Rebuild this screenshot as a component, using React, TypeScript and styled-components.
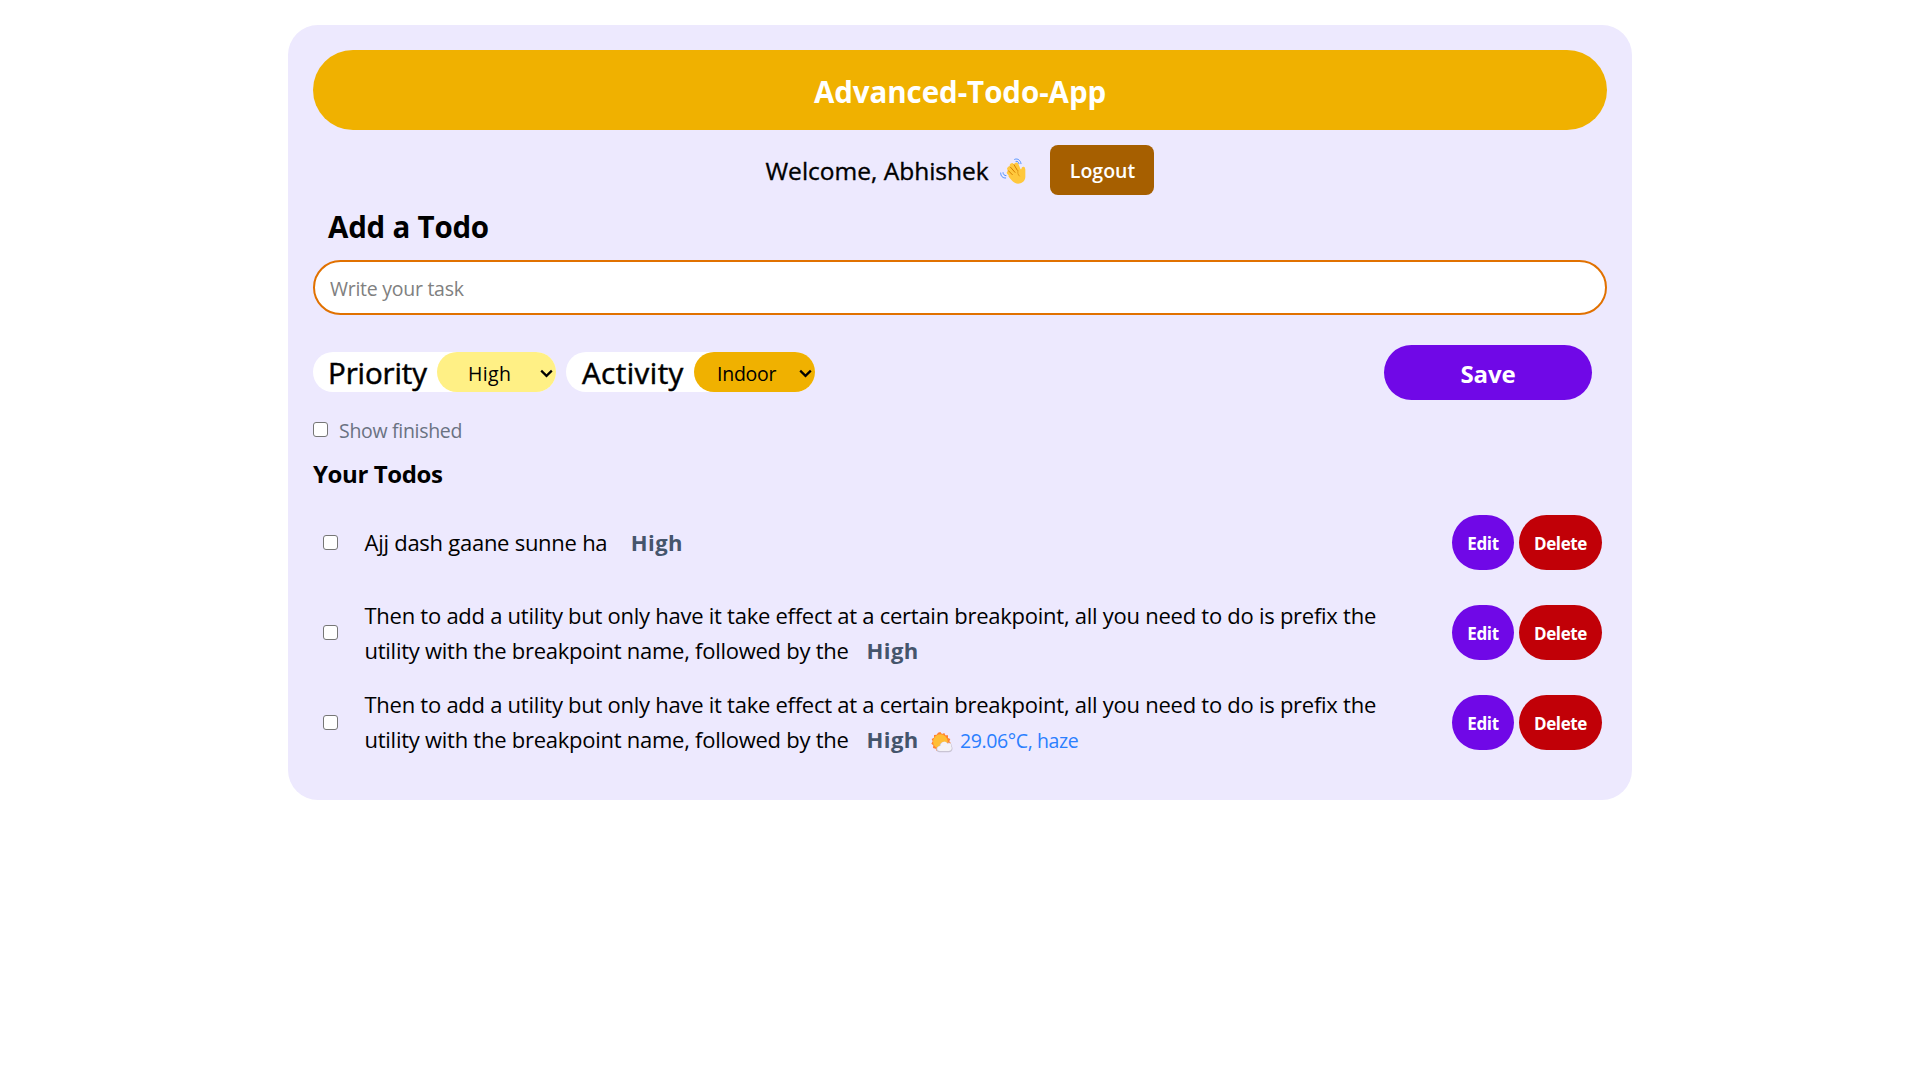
import React, { useState } from "react";
import styled, { createGlobalStyle } from "styled-components";

const GlobalStyle = createGlobalStyle`
  *, *::before, *::after { box-sizing: border-box; }
  body {
    margin: 0;
    background: #fff;
    color: #000;
    font-family: "Open Sans", "Noto Sans", sans-serif;
  }
  h1, h2, h3, p, ul { margin: 0; padding: 0; }
  button, input, select { font-family: inherit; border: 0; margin: 0; }
`;

const Card = styled.main`
  width: 1344px;
  height: 775px;
  margin: 25px auto;
  padding: 25px;
  border-radius: 30px;
  background: #ede9fe;
  display: flex;
  flex-direction: column;
  & > * { flex: none; }
`;

const Banner = styled.h1`
  height: 80px;
  padding-top: 2px;
  border-radius: 40px;
  background: #f0b100;
  color: #fff;
  font-size: 29.5px;
  font-weight: 700;
  line-height: 79px;
  letter-spacing: -0.06px;
  text-align: center;
`;

const Greeting = styled.div`
  display: flex;
  align-items: center;
  height: 50px;
  margin-top: 15px;
  padding-left: 452.5px;
`;

const GreetingText = styled.h2`
  width: 234.5px;
  padding-top: 1px;
  font-size: 24.5px;
  font-weight: 500;
  line-height: 50px;
  -webkit-text-stroke: 0.35px #000;
  white-space: nowrap;
`;

const WaveIcon = styled.svg`
  width: 26px;
  height: 26px;
  margin-top: 2px;
`;

const LogoutButton = styled.button`
  width: 104px;
  height: 50px;
  margin-left: auto;
  margin-right: 453px;
  padding: 0 0 0 1px;
  border-radius: 8px;
  background: #a65f00;
  color: #fff;
  font-size: 19.5px;
  font-weight: 600;
`;

const AddHeading = styled.h2`
  height: 65px;
  padding: 11px 0 0 15px;
  font-size: 29.5px;
  font-weight: 700;
  line-height: 41px;
  letter-spacing: -0.22px;
`;

const TaskInput = styled.input`
  width: 100%;
  height: 55px;
  padding: 2px 15px 0;
  border: 2px solid #e17100;
  border-radius: 28px;
  background: #fff;
  font-size: 19.5px;
  letter-spacing: -0.27px;
  outline: none;
  &::placeholder { color: #808080; opacity: 1; }
`;

const Controls = styled.div`
  display: flex;
  align-items: center;
  gap: 10px;
  height: 55px;
  margin-top: 30px;
`;

const Pill = styled.label<{ $width: number; $indent: number }>`
  display: flex;
  justify-content: space-between;
  width: ${p => p.$width}px;
  height: 40px;
  margin-top: -1px;
  padding-left: ${p => p.$indent}px;
  border-radius: 20px;
  background: #fff;
`;

const PillName = styled.span<{ $spacing: number }>`
  font-size: 29.5px;
  font-weight: 500;
  line-height: 41px;
  -webkit-text-stroke: 0.5px #000;
  letter-spacing: ${p => p.$spacing}px;
`;

const SelectBox = styled.span<{ $width: number }>`
  display: grid;
  width: ${p => p.$width}px;
  height: 40px;
`;

const Select = styled.select<{ $bg: string; $indent: number; $spacing: number }>`
  grid-area: 1 / 1;
  width: 100%;
  height: 40px;
  padding: 3px 0 0 ${p => p.$indent}px;
  appearance: none;
  border-radius: 20px;
  background: ${p => p.$bg};
  color: #000;
  font-size: 19.5px;
  letter-spacing: ${p => p.$spacing}px;
`;

const Chevron = styled.svg`
  grid-area: 1 / 1;
  align-self: center;
  justify-self: end;
  width: 13px;
  height: 9px;
  margin-right: 3.5px;
  margin-top: 2px;
  pointer-events: none;
`;

const SaveButton = styled.button`
  width: 208px;
  height: 55px;
  margin: 0 15px 0 auto;
  padding: 2px 0 0;
  border-radius: 28px;
  background: #7008e7;
  color: #fff;
  font-size: 24px;
  font-weight: 700;
  letter-spacing: -0.1px;
`;

const Checkbox = styled.input.attrs({ type: "checkbox" })`
  flex: none;
  appearance: none;
  width: 15px;
  height: 15px;
  border: 1px solid #767676;
  border-radius: 3px;
  background: #fff;
  &:checked { background: #0075ff; border-color: #0075ff; }
`;

const FilterRow = styled.label`
  display: flex;
  align-items: center;
  gap: 11px;
  height: 29px;
  margin-top: 15px;
`;

const FilterText = styled.span`
  padding-top: 2px;
  color: #6a7282;
  font-size: 19.5px;
  line-height: 27px;
  letter-spacing: -0.3px;
`;

const ListHeading = styled.h3`
  height: 39px;
  margin-top: 14px;
  font-size: 24px;
  font-weight: 700;
  line-height: 32px;
  letter-spacing: -0.4px;
`;

const List = styled.ul`
  list-style: none;
`;

const Row = styled.li`
  display: flex;
  align-items: center;
  height: 90px;
  padding: 0 5px 0 10px;
`;

const RowText = styled.p`
  width: 1062px;
  margin-left: 26.5px;
  padding-top: 1px;
  font-size: 22px;
  line-height: 35px;
  letter-spacing: -0.26px;
`;

const Priority = styled.span`
  margin-left: 18px;
  color: #45556c;
  font-weight: 700;
  letter-spacing: 0.4px;
`;

const Weather = styled.span`
  margin-left: 12.5px;
  color: #2b7fff;
  font-size: 19.5px;
  letter-spacing: -0.4px;
`;

const SunIcon = styled.svg`
  width: 22px;
  height: 21px;
  margin-left: -0.5px;
  margin-right: 7.5px;
  vertical-align: -5px;
`;

const Actions = styled.div`
  display: flex;
  gap: 5px;
  margin-left: auto;
  padding-top: 1px;
`;

const ActionButton = styled.button<{ $bg: string; $width: number }>`
  width: ${p => p.$width}px;
  height: 55px;
  padding: 2px 0 0;
  border-radius: 28px;
  background: ${p => p.$bg};
  color: #fff;
  font-size: 17px;
  font-weight: 700;
  letter-spacing: -0.38px;
`;

const Arrow = () => (
  <Chevron viewBox="0 0 13 9" fill="none" stroke="#000" strokeWidth="2.2">
    <path d="M1.2 1.6 6.5 6.9l5.3-5.3" />
  </Chevron>
);

const Wave = () => (
  <WaveIcon viewBox="0 0 78 78" fill="none" strokeLinecap="round" strokeLinejoin="round">
    <g stroke="#ffc83d" strokeWidth="13">
      <path d="M46 58 27 44" />
      <path d="M48 52 28 32" />
      <path d="M52 46 36 22" />
      <path d="M58 42 49 20" />
      <path d="M67 50 70 32" strokeWidth="11" />
    </g>
    <path d="M30 46 42 28 60 34 76 34 76 57C75 71 64 77 54 77 43 76 32 66 25 54Z" fill="#ffc83d" />
    <g stroke="#d67d00" strokeWidth="3">
      <path d="M25 38 37 50" />
      <path d="M31 27 45 43" />
      <path d="M42 20 52 37" />
      <path d="M54 38C52 44 54 50 58 54" stroke="#e59c18" />
    </g>
    <g stroke="#5092ff" strokeWidth="3">
      <path d="M44 4C53 0 62 7 63 17" />
      <path d="M48 10C53 9 56 12 57 17" />
      <path d="M2 45C2 54 8 61 17 60" />
      <path d="M9 44C9 49 13 53 18 53" />
    </g>
  </WaveIcon>
);

const Sun = () => (
  <SunIcon viewBox="0 0 66 63">
    <path
      fill="#ff8330"
      d="M28 0l5 6 7-3 3 7 8 0 0 8 7 3-3 7 5 6-6 5 1 8-7 1-3 7-8-2-5 6-7-4-8 2-3-7-8-2 1-8-6-5 4-7-3-7 7-4 0-8 8-1 4-6z"
    />
    <circle cx="28" cy="29" r="22" fill="#ffbe35" />
    <path
      fill="#c9c4d4"
      d="M26 61C12 61 13 43 25 43 27 30 41 25 49 34 51 28 64 33 62 42 68 50 63 61 53 61Z"
    />
    <path
      fill="#f4f2f7"
      d="M27 57C15 57 17 42 28 42 30 28 44 26 49 35 55 31 63 35 60 43 65 49 61 57 53 57Z"
    />
  </SunIcon>
);

type Todo = { text: string; priority: string; weather?: string };

const LONG_TEXT =
  "Then to add a utility but only have it take effect at a certain breakpoint, all you need to do is prefix the utility with the breakpoint name, followed by the";

const TODOS: Todo[] = [
  { text: "Ajj dash gaane sunne ha\u00a0", priority: "High" },
  { text: LONG_TEXT, priority: "High" },
  { text: LONG_TEXT, priority: "High", weather: "29.06°C, haze" },
];

export default function App() {
  const [task, setTask] = useState("");
  return (
    <>
      <GlobalStyle />
      <Card>
        <Banner>Advanced-Todo-App</Banner>
        <Greeting>
          <GreetingText>Welcome, Abhishek</GreetingText>
          <Wave />
          <LogoutButton>Logout</LogoutButton>
        </Greeting>
        <AddHeading>Add a Todo</AddHeading>
        <TaskInput placeholder="Write your task" value={task} onChange={e => setTask(e.target.value)} />
        <Controls>
          <Pill $width={243} $indent={15}>
            <PillName $spacing={-0.12}>Priority</PillName>
            <SelectBox $width={119}>
              <Select $bg="#fff085" $indent={31} $spacing={0.4} defaultValue="High">
                <option>High</option>
                <option>Medium</option>
                <option>Low</option>
              </Select>
              <Arrow />
            </SelectBox>
          </Pill>
          <Pill $width={249} $indent={16}>
            <PillName $spacing={0.45}>Activity</PillName>
            <SelectBox $width={121}>
              <Select $bg="#f0b100" $indent={23} $spacing={-0.24} defaultValue="Indoor">
                <option>Indoor</option>
                <option>Outdoor</option>
              </Select>
              <Arrow />
            </SelectBox>
          </Pill>
          <SaveButton>Save</SaveButton>
        </Controls>
        <FilterRow>
          <Checkbox />
          <FilterText>Show finished</FilterText>
        </FilterRow>
        <ListHeading>Your Todos</ListHeading>
        <List>
          {TODOS.map((todo, i) => (
            <Row key={i}>
              <Checkbox />
              <RowText>
                {todo.text}
                <Priority>{todo.priority}</Priority>
                {todo.weather && (
                  <Weather>
                    <Sun />
                    {todo.weather}
                  </Weather>
                )}
              </RowText>
              <Actions>
                <ActionButton $bg="#7008e7" $width={62}>Edit</ActionButton>
                <ActionButton $bg="#c10007" $width={83}>Delete</ActionButton>
              </Actions>
            </Row>
          ))}
        </List>
      </Card>
    </>
  );
}
